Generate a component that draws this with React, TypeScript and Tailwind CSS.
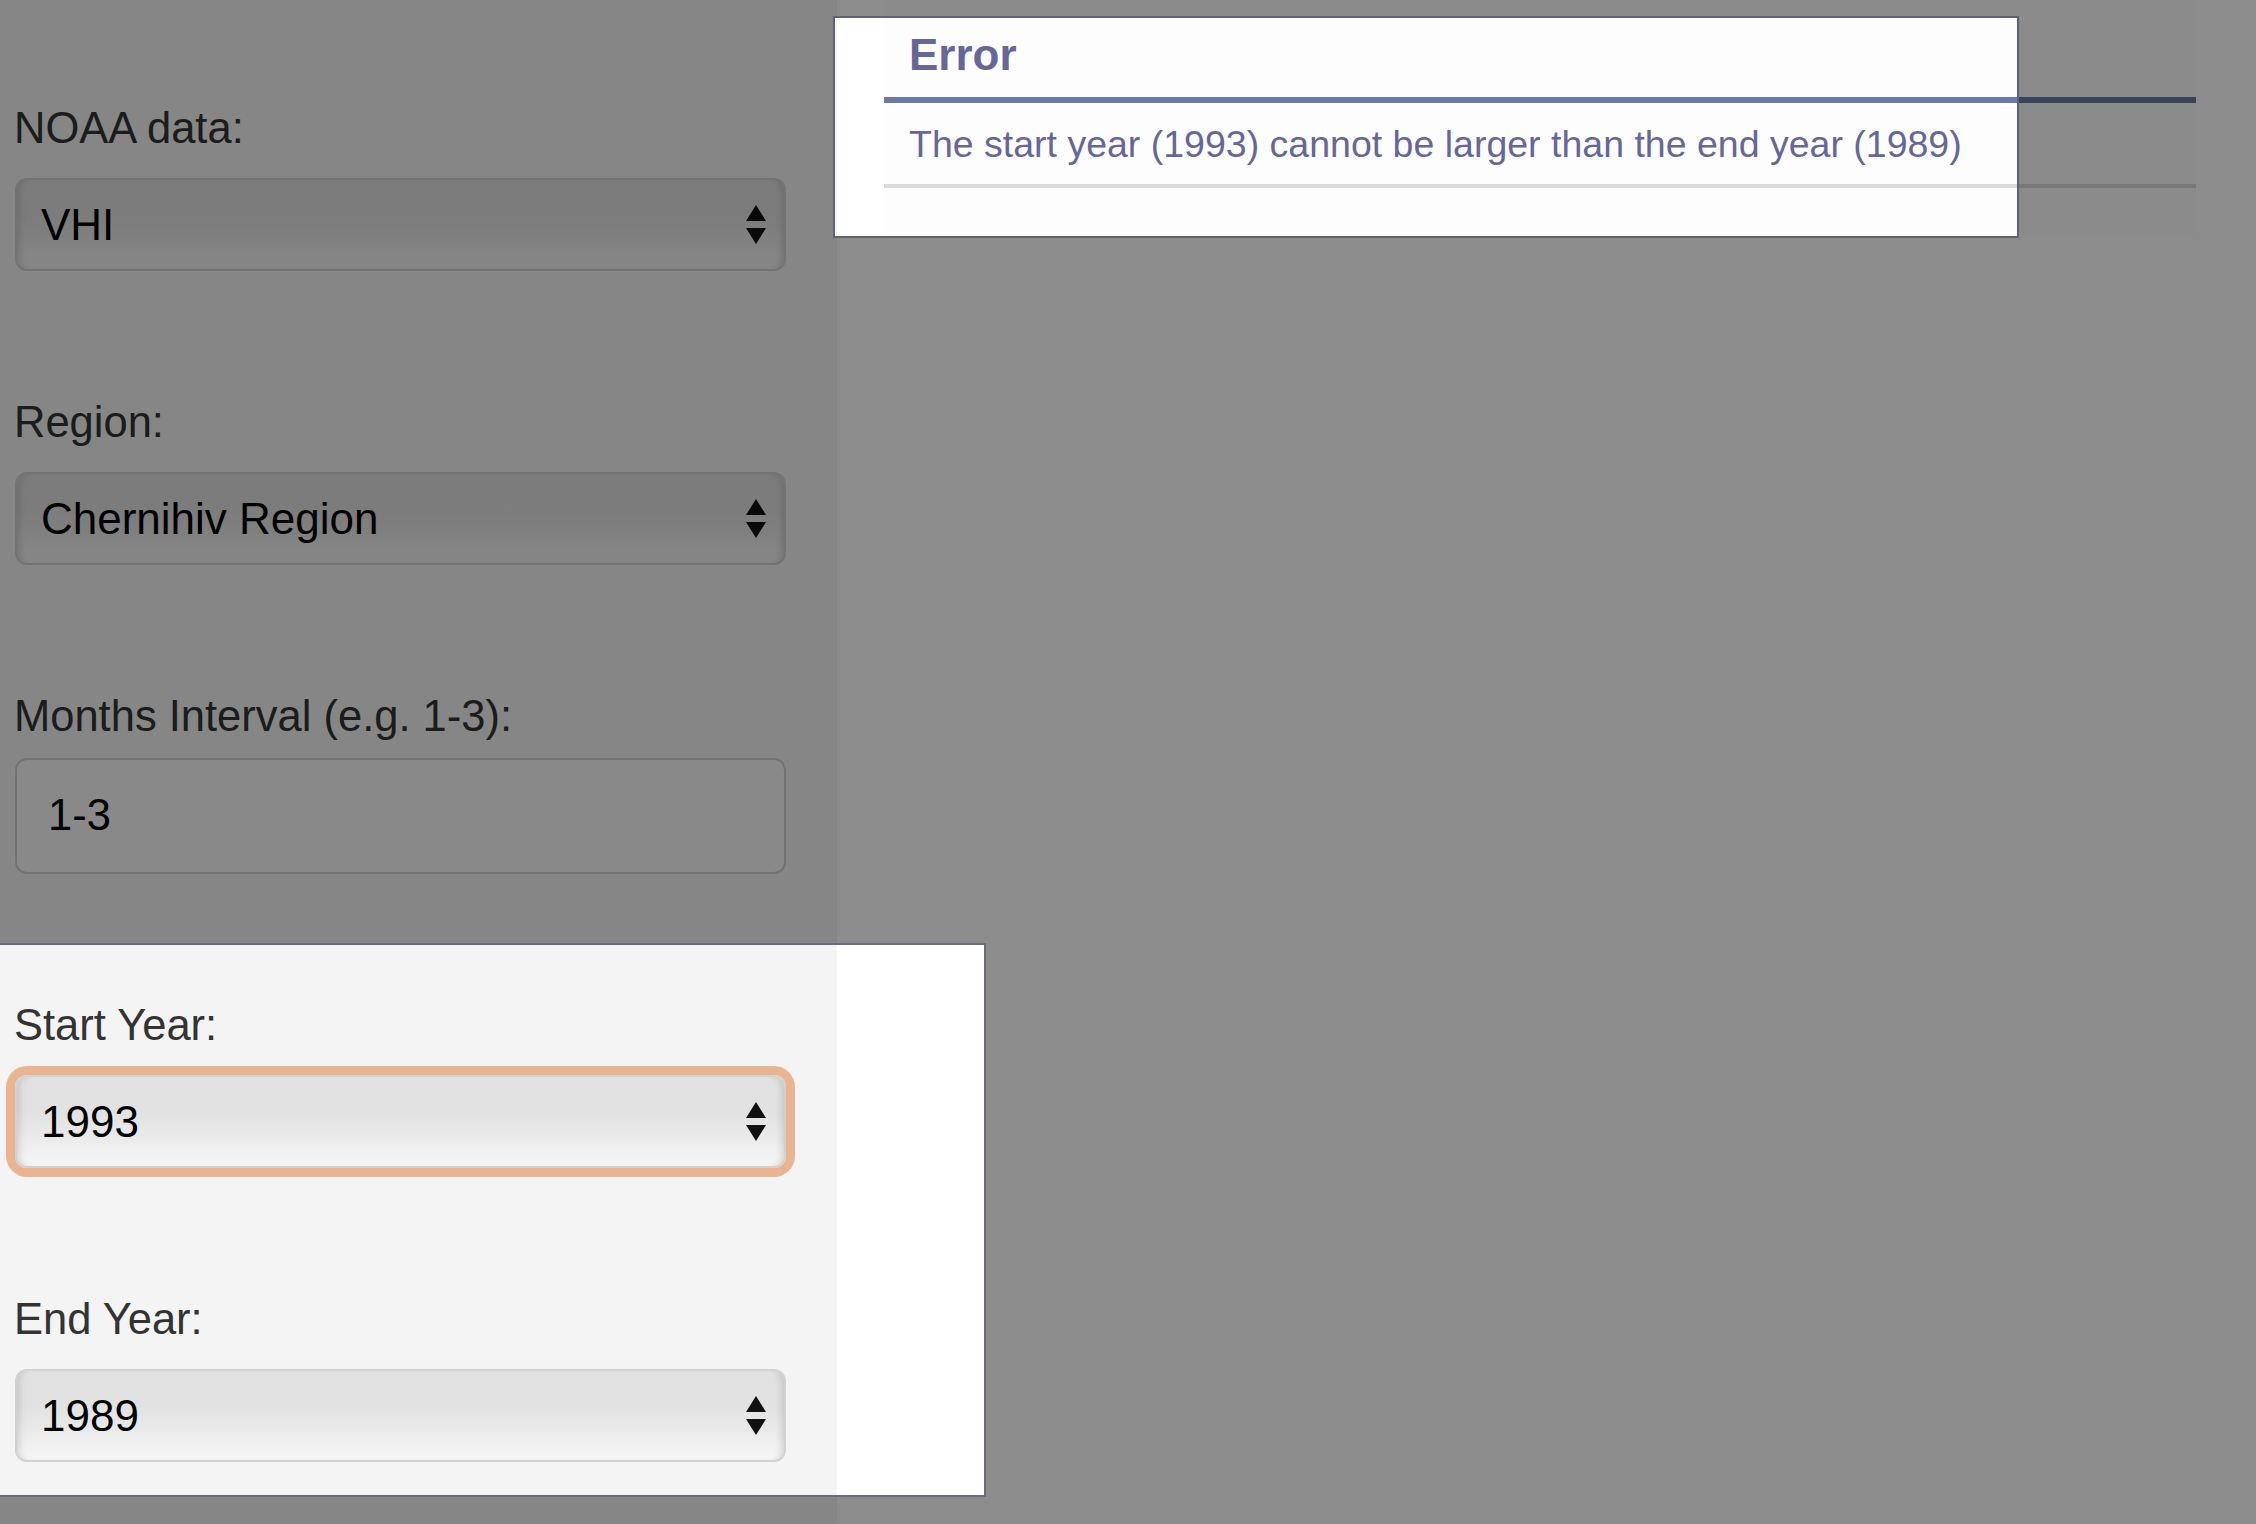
import React from "react";

function Arrows() {
  return (
    <svg width="20" height="39" viewBox="0 0 20 39" className="shrink-0">
      <polygon points="0,16 10,0 20,16" fill="#111" />
      <polygon points="0,23 20,23 10,39" fill="#111" />
    </svg>
  );
}

function FakeSelect({ value, focused = false }: { value: string; focused?: boolean }) {
  return (
    <div
      className={
        "mt-[24px] h-[93px] flex items-center justify-between pl-[24px] pr-[18px] rounded-[12px] border-2 border-[#d2d2d2] bg-[linear-gradient(to_bottom,#e1e1e1_0%,#e2e2e2_40%,#e8e8e8_62%,#f2f2f2_88%,#f5f5f5_100%)] text-[44px] text-black " +
        (focused
          ? "shadow-[0_0_0_9px_#e9b591,inset_7px_0_7px_-5px_rgba(0,0,0,0.14),inset_-7px_0_7px_-5px_rgba(0,0,0,0.14)]"
          : "shadow-[inset_7px_0_7px_-5px_rgba(0,0,0,0.14),inset_-7px_0_7px_-5px_rgba(0,0,0,0.14)]")
      }
    >
      <span>{value}</span>
      <Arrows />
    </div>
  );
}

function Label({ children }: { children: React.ReactNode }) {
  return <label className="block -ml-[1px] text-[43.5px] leading-[52px] text-[#333]">{children}</label>;
}

export default function App() {
  return (
    <div className="relative w-[2256px] h-[1524px] overflow-hidden bg-white flex font-['Liberation_Sans',Arial,sans-serif]">
      {/* Sidebar inputs */}
      <aside className="w-[837px] shrink-0 bg-[#f4f4f4] pl-[15px] pr-[51px] pt-[102px] flex flex-col gap-[125px]">
        <div>
          <Label>NOAA data:</Label>
          <FakeSelect value="VHI" />
        </div>
        <div>
          <Label>Region:</Label>
          <FakeSelect value="Chernihiv Region" />
        </div>
        <div>
          <Label>Months Interval (e.g. 1-3):</Label>
          <div className="mt-[16px] h-[116px] flex items-center pl-[31px] rounded-[12px] border-2 border-[#cfcfcf] bg-[#fafafa] text-[43.5px] text-black">
            1-3
          </div>
        </div>
        <div>
          <Label>Start Year:</Label>
          <FakeSelect value="1993" focused />
        </div>
        <div>
          <Label>End Year:</Label>
          <FakeSelect value="1989" />
        </div>
      </aside>

      {/* Error modal */}
      <main className="flex-1 min-w-0">
        <div className="ml-[47px] w-[1312px] h-[236px] bg-[#fdfdfd] pt-[28px]">
          <h2 className="px-[25px] pb-[16px] border-b-[6px] border-[#6b78aa] text-[44px] leading-[53px] font-bold text-[#666699]">
            Error
          </h2>
          <p className="px-[25px] pt-[19px] pb-[18px] border-b-4 border-[#dadada] text-[37.5px] leading-[44px] text-[#666699]">
            The start year (1993) cannot be larger than the end year (1989)
          </p>
        </div>
      </main>

      {/* Tour overlay with two highlighted holes */}
      <div className="absolute inset-0 z-10 bg-[rgba(0,0,0,0.45)] [clip-path:path(evenodd,'M0_0H2256V1524H0Z_M835_18H2017V236H835Z_M0_945H984V1495H0Z')]" />
      <div className="absolute left-[833px] top-[16px] w-[1186px] h-[222px] border-2 border-[#5f6273] z-20 pointer-events-none" />
      <div className="absolute left-[-2px] top-[943px] w-[988px] h-[554px] border-2 border-[#686b7b] z-20 pointer-events-none" />
    </div>
  );
}
